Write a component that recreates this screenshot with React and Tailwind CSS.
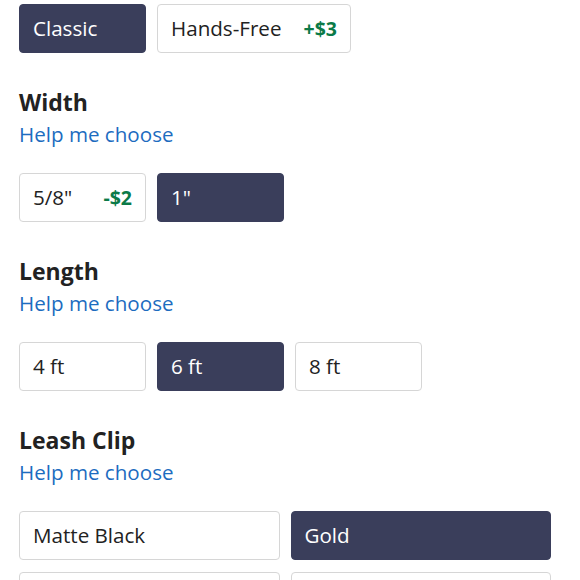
import React, { useState } from 'react'

const Option = ({ label, price, selected, onClick, className = "" }) => (
  <button
    type="button"
    onClick={onClick}
    className={`flex h-[49px] items-center justify-between gap-[22px] rounded-[4px] border px-[13px] text-[20.6px] leading-none ${
      selected ? 'border-[#3a3e5b] bg-[#3a3e5b] text-white' : 'border-[#d6d6d6] bg-white text-[#222222]'
    } ${className}`}
  >
    <span>{label}</span>
    {price && <span className="font-bold text-[#0b7a48] text-[19.5px]">{price}</span>}
  </button>
)

const Section = ({ title, children }) => (
  <div className="mt-[34px]">
    <h2 className="text-[23px] font-bold leading-[30px] text-[#222222]">{title}</h2>
    <a href="#" className="mt-[3px] block text-[20.6px] leading-[28px] text-[#1d6cbf]">Help me choose</a>
    <div className="mt-[25px]">{children}</div>
  </div>
)

export default function App() {
  const [style, setStyle] = useState('classic')
  const [width, setWidth] = useState('1')
  const [length, setLength] = useState('6')
  const [clip, setClip] = useState('gold')

  return (
    <div className="min-h-[580px] bg-white pl-[19px] pr-[29px] pt-[4px] font-['Open_Sans',sans-serif]">
      <div className="flex gap-[11px]">
        <Option label="Classic" selected={style === 'classic'} onClick={() => setStyle('classic')} className="w-[127px]" />
        <Option label="Hands-Free" price="+$3" selected={style === 'hands'} onClick={() => setStyle('hands')} />
      </div>

      <Section title="Width">
        <div className="flex gap-[11px]">
          <Option label={'5/8"'} price="-$2" selected={width === '58'} onClick={() => setWidth('58')} className="w-[127px]" />
          <Option label={'1"'} selected={width === '1'} onClick={() => setWidth('1')} className="w-[127px]" />
        </div>
      </Section>

      <Section title="Length">
        <div className="flex gap-[11px]">
          {['4', '6', '8'].map((l) => (
            <Option key={l} label={`${l} ft`} selected={length === l} onClick={() => setLength(l)} className="w-[127px]" />
          ))}
        </div>
      </Section>

      <Section title="Leash Clip">
        <div className="grid grid-cols-2 gap-x-[11px] gap-y-[12px]">
          <Option label="Matte Black" selected={clip === 'black'} onClick={() => setClip('black')} />
          <Option label="Gold" selected={clip === 'gold'} onClick={() => setClip('gold')} />
          <Option label="Silver" selected={clip === 'silver'} onClick={() => setClip('silver')} />
          <Option label="Rose Gold" selected={clip === 'rose'} onClick={() => setClip('rose')} />
        </div>
      </Section>
    </div>
  )
}
